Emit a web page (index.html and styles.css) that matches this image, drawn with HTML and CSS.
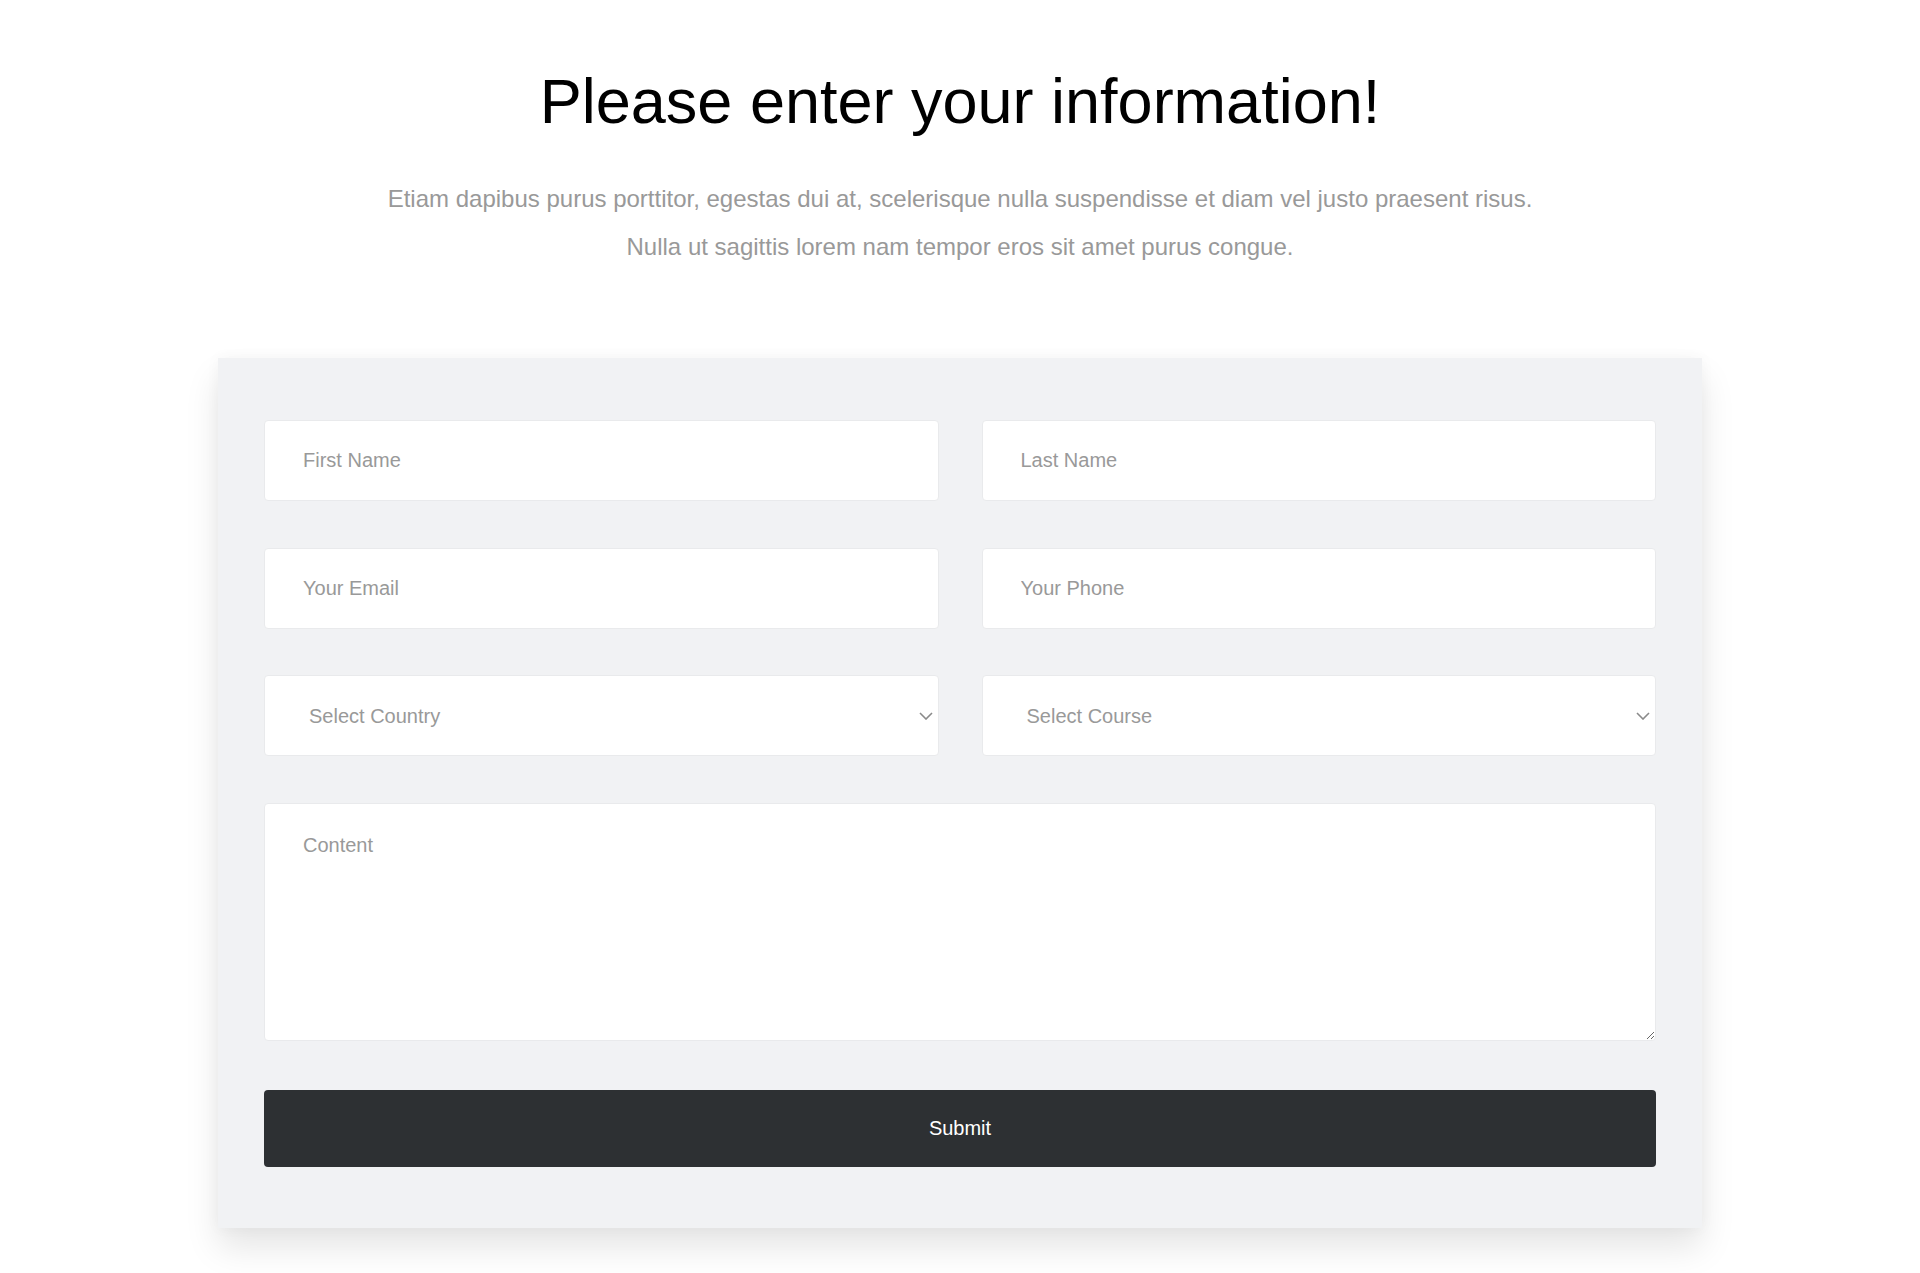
FILE: index.html
```html
<!DOCTYPE html>
<html lang="en">
<head>
<meta charset="utf-8">
<title>Please enter your information!</title>
<link rel="stylesheet" href="styles.css">
</head>
<body>
<main class="page">
  <header class="intro">
    <h1 class="title">Please enter your information!</h1>
    <p class="lead">Etiam dapibus purus porttitor, egestas dui at, scelerisque nulla suspendisse et diam vel justo praesent risus.<br>Nulla ut sagittis lorem nam tempor eros sit amet purus congue.</p>
  </header>
  <form class="card">
    <div class="grid">
      <input class="field" type="text" placeholder="First Name">
      <input class="field" type="text" placeholder="Last Name">
      <input class="field" type="email" placeholder="Your Email">
      <input class="field" type="tel" placeholder="Your Phone">
      <div class="select-wrap">
        <select class="field select">
          <option>Select Country</option>
        </select>
        <svg class="chev" width="14" height="8" viewBox="0 0 14 8"><path d="M1 1 L7 7 L13 1" fill="none" stroke="#8a8a8a" stroke-width="1.6"/></svg>
      </div>
      <div class="select-wrap">
        <select class="field select">
          <option>Select Course</option>
        </select>
        <svg class="chev" width="14" height="8" viewBox="0 0 14 8"><path d="M1 1 L7 7 L13 1" fill="none" stroke="#8a8a8a" stroke-width="1.6"/></svg>
      </div>
      <textarea class="field area" placeholder="Content"></textarea>
    </div>
    <button class="submit" type="button">Submit</button>
  </form>
</main>
</body>
</html>
```
FILE: styles.css
```css
* { box-sizing: border-box; }
html, body { margin: 0; padding: 0; background: #ffffff; }
body { font-family: "Liberation Sans", Arial, sans-serif; }

.page {
  width: 100%;
  display: flex;
  flex-direction: column;
  align-items: center;
  padding-top: 62px;
  padding-bottom: 46px;
}

.intro { text-align: center; }

.title {
  margin: 0;
  font-size: 63px;
  line-height: 78px;
  font-weight: 400;
  color: #000;
}

.lead {
  margin: 35px 0 0;
  font-size: 24px;
  line-height: 48px;
  color: #999999;
}

.card {
  margin-top: 87px;
  width: 1484px;
  background: #f1f2f4;
  padding: 62px 46px 61px;
  box-shadow: 0 20px 32px rgba(0, 0, 0, 0.1), 0 0 14px rgba(0, 0, 0, 0.04);
}

.grid {
  display: grid;
  grid-template-columns: 1fr 1fr;
  column-gap: 43px;
  row-gap: 46.5px;
}

.field {
  display: block;
  width: 100%;
  height: 81px;
  border: 1px solid #e9eaec;
  border-radius: 4px;
  background: #ffffff;
  font-family: "Liberation Sans", Arial, sans-serif;
  font-size: 20px;
  color: #333;
  padding: 0 20px 0 38px;
  outline: none;
}

.field::placeholder { color: #999999; opacity: 1; }

.select-wrap { position: relative; }

.select {
  appearance: none;
  -webkit-appearance: none;
  padding-left: 44px;
  color: #999999;
}

.chev {
  position: absolute;
  right: 6px;
  top: 37px;
  pointer-events: none;
}

.area {
  grid-column: 1 / 3;
  height: 238px;
  padding-top: 26px;
  line-height: 1.5;
  resize: both;
}

.submit {
  display: block;
  width: 100%;
  height: 77px;
  margin-top: 49px;
  border: none;
  border-radius: 4px;
  background: #2d3033;
  color: #ffffff;
  font-family: "Liberation Sans", Arial, sans-serif;
  font-size: 20px;
  cursor: pointer;
}
```
